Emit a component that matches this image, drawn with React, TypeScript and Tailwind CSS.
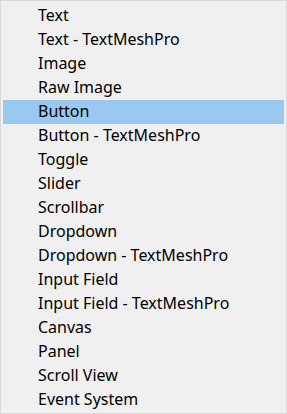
const ITEMS = [
  "Text",
  "Text - TextMeshPro",
  "Image",
  "Raw Image",
  "Button",
  "Button - TextMeshPro",
  "Toggle",
  "Slider",
  "Scrollbar",
  "Dropdown",
  "Dropdown - TextMeshPro",
  "Input Field",
  "Input Field - TextMeshPro",
  "Canvas",
  "Panel",
  "Scroll View",
  "Event System",
];

export default function App() {
  const selected = "Button";
  return (
    <div className="w-[287px] h-[414px] bg-[#f0f0f0] border border-[#d9d9d9] p-[2px] pt-[3px] font-['Noto_Sans','Liberation_Sans',sans-serif] text-[16px] text-black">
      <ul className="flex flex-col">
        {ITEMS.map((item) => (
          <li
            key={item}
            className={
              "h-6 flex items-center pl-[35px] leading-none pb-[2px] " +
              (item === selected ? "bg-[#99c9ef]" : "")
            }
          >
            {item}
          </li>
        ))}
      </ul>
    </div>
  );
}
